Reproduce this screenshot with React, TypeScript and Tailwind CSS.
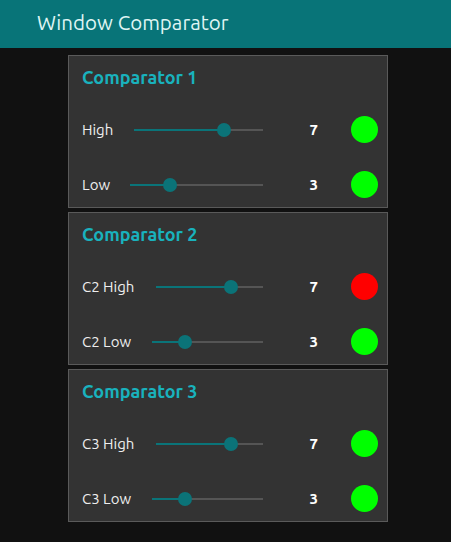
import React from "react";

type Row = { label: string; labelW: string; value: number; color: string };

const cards: { title: string; rows: Row[] }[] = [
  {
    title: "Comparator 1",
    rows: [
      { label: "High", labelW: "w-[52px]", value: 7, color: "bg-[#00ff00]" },
      { label: "Low", labelW: "w-[48px]", value: 3, color: "bg-[#00ff00]" },
    ],
  },
  {
    title: "Comparator 2",
    rows: [
      { label: "C2 High", labelW: "w-[74px]", value: 7, color: "bg-[#ff0000]" },
      { label: "C2 Low", labelW: "w-[70px]", value: 3, color: "bg-[#00ff00]" },
    ],
  },
  {
    title: "Comparator 3",
    rows: [
      { label: "C3 High", labelW: "w-[74px]", value: 7, color: "bg-[#00ff00]" },
      { label: "C3 Low", labelW: "w-[70px]", value: 3, color: "bg-[#00ff00]" },
    ],
  },
];

function Slider({ value }: { value: number }) {
  const pct = (value / 10) * 100;
  return (
    <div className="relative flex-1 h-[27px] flex items-center">
      <div className="w-full h-[2px] bg-[#555555] relative">
        <div className="absolute left-0 top-0 h-[2px] bg-[#0a7479]" style={{ width: `${pct}%` }} />
      </div>
      <div
        className="absolute top-1/2 w-[14px] h-[14px] rounded-full bg-[#0b7378] -translate-x-1/2 -translate-y-1/2"
        style={{ left: `${pct}%` }}
      />
    </div>
  );
}

function RowView({ row, first }: { row: Row; first: boolean }) {
  return (
    <div className={`flex items-center h-[27px] ${first ? "mt-[18px]" : "mt-[28px]"}`}>
      <div className={`${row.labelW} shrink-0 text-[15px] text-[#eeeeee] leading-none`}>{row.label}</div>
      <Slider value={row.value} />
      <div className="w-[55px] shrink-0 text-right text-[15px] font-bold text-white leading-none">{row.value}</div>
      <div className={`ml-[33px] w-[27px] h-[27px] rounded-full shrink-0 ${row.color}`} />
    </div>
  );
}

export default function App() {
  return (
    <div
      className="w-[451px] h-[542px] bg-[#111111] overflow-hidden"
      style={{ fontFamily: '"Ubuntu", "Noto Sans", "Open Sans", sans-serif' }}
    >
      <div className="h-12 bg-[#087478] flex items-center pl-[37px] pb-[2px]">
        <span className="text-[20.5px] text-[#dff4f3] leading-none">Window Comparator</span>
      </div>
      <div className="ml-[68px] w-[320px] pt-[7px] flex flex-col gap-[4px]">
        {cards.map((c) => (
          <div key={c.title} className="border border-[#5a5a5a] bg-[#333333] h-[153px] pl-[13px] pr-[9px]">
            <div className="h-[42px] flex items-center text-[18px] font-semibold text-[#19b2bd] leading-none">
              {c.title}
            </div>
            {c.rows.map((r, i) => (
              <RowView key={r.label} row={r} first={i === 0} />
            ))}
          </div>
        ))}
      </div>
    </div>
  );
}
